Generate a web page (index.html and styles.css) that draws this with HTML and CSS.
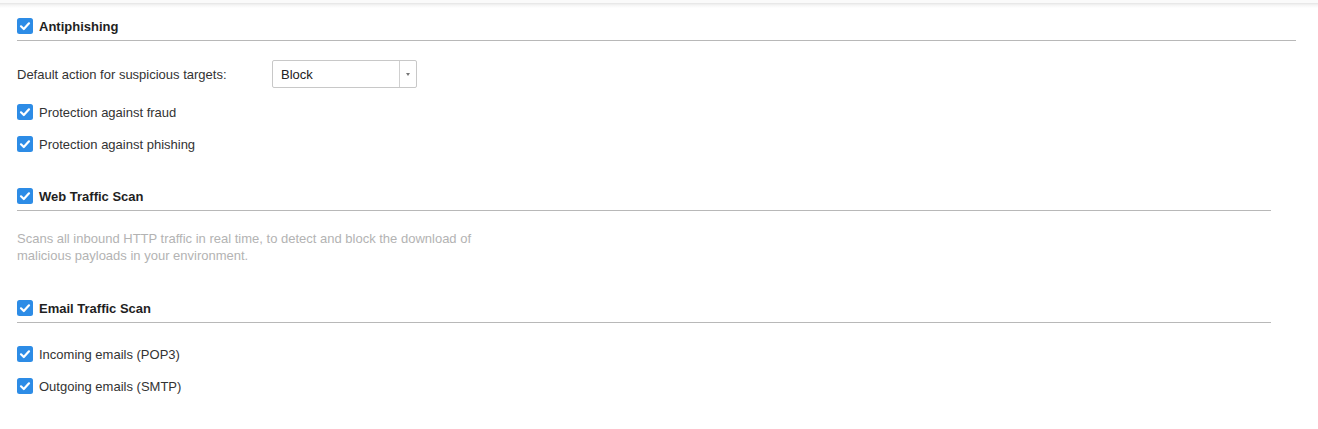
FILE: index.html
```html
<!DOCTYPE html>
<html>
<head>
<meta charset="utf-8">
<link rel="stylesheet" href="styles.css">
</head>
<body>
<div class="topshadow"></div>
<div class="page">
  <section class="section wide">
    <div class="heading">
      <svg class="cb" viewBox="0 0 16 16"><rect width="16" height="16" rx="2.5" fill="#2d8ce6"/><polyline points="4,8.3 6.8,11 12,5.3" fill="none" stroke="#fff" stroke-width="2.2" stroke-linecap="round" stroke-linejoin="round"/></svg>
      <span class="txt">Antiphishing</span>
    </div>
    <div class="field">
      <label class="field-label">Default action for suspicious targets:</label>
      <div class="select">
        <span class="select-value">Block</span>
        <span class="select-arrow"><i></i></span>
      </div>
    </div>
    <div class="row">
      <svg class="cb" viewBox="0 0 16 16"><rect width="16" height="16" rx="2.5" fill="#2d8ce6"/><polyline points="4,8.3 6.8,11 12,5.3" fill="none" stroke="#fff" stroke-width="2.2" stroke-linecap="round" stroke-linejoin="round"/></svg>
      <span class="txt">Protection against fraud</span>
    </div>
    <div class="row">
      <svg class="cb" viewBox="0 0 16 16"><rect width="16" height="16" rx="2.5" fill="#2d8ce6"/><polyline points="4,8.3 6.8,11 12,5.3" fill="none" stroke="#fff" stroke-width="2.2" stroke-linecap="round" stroke-linejoin="round"/></svg>
      <span class="txt">Protection against phishing</span>
    </div>
  </section>

  <section class="section narrow web">
    <div class="heading">
      <svg class="cb" viewBox="0 0 16 16"><rect width="16" height="16" rx="2.5" fill="#2d8ce6"/><polyline points="4,8.3 6.8,11 12,5.3" fill="none" stroke="#fff" stroke-width="2.2" stroke-linecap="round" stroke-linejoin="round"/></svg>
      <span class="txt">Web Traffic Scan</span>
    </div>
    <p class="desc">Scans all inbound HTTP traffic in real time, to detect and block the download of malicious payloads in your environment.</p>
  </section>

  <section class="section narrow email">
    <div class="heading">
      <svg class="cb" viewBox="0 0 16 16"><rect width="16" height="16" rx="2.5" fill="#2d8ce6"/><polyline points="4,8.3 6.8,11 12,5.3" fill="none" stroke="#fff" stroke-width="2.2" stroke-linecap="round" stroke-linejoin="round"/></svg>
      <span class="txt">Email Traffic Scan</span>
    </div>
    <div class="rows-email">
      <div class="row">
        <svg class="cb" viewBox="0 0 16 16"><rect width="16" height="16" rx="2.5" fill="#2d8ce6"/><polyline points="4,8.3 6.8,11 12,5.3" fill="none" stroke="#fff" stroke-width="2.2" stroke-linecap="round" stroke-linejoin="round"/></svg>
        <span class="txt">Incoming emails (POP3)</span>
      </div>
      <div class="row">
        <svg class="cb" viewBox="0 0 16 16"><rect width="16" height="16" rx="2.5" fill="#2d8ce6"/><polyline points="4,8.3 6.8,11 12,5.3" fill="none" stroke="#fff" stroke-width="2.2" stroke-linecap="round" stroke-linejoin="round"/></svg>
        <span class="txt">Outgoing emails (SMTP)</span>
      </div>
    </div>
  </section>
</div>
</body>
</html>
```

FILE: styles.css
```css
html, body {
  margin: 0;
  padding: 0;
  background: #fff;
}
body {
  font-family: "Liberation Sans", Arial, sans-serif;
  font-size: 13px;
  color: #333;
}
.topshadow {
  height: 8px;
  background: linear-gradient(#fafafa 0, #fafafa 3px, #e4e4e4 3px, #f4f4f4 5px, #fff 8px);
}
.page {
  padding-left: 17px;
  padding-top: 10px;
}
.section.wide { margin-right: 22px; }
.section.narrow { margin-right: 47px; }
.heading {
  display: flex;
  align-items: center;
  gap: 6px;
  height: 16px;
  padding-bottom: 6px;
  border-bottom: 1px solid #b8b8b8;
  font-weight: bold;
  color: #1f1f1f;
  line-height: 16px;
}
.txt {
  padding-top: 2px;
}
.cb {
  width: 16px;
  height: 16px;
  flex: none;
  display: block;
}
.field {
  display: flex;
  align-items: center;
  margin-top: 19px;
  height: 28px;
}
.field-label {
  width: 255px;
  flex: none;
  line-height: 16px;
  padding-top: 1px;
}
.select {
  display: flex;
  width: 145px;
  height: 28px;
  box-sizing: border-box;
  border: 1px solid #c8c8c8;
  border-radius: 2px;
  color: #222;
}
.select-value {
  flex: 1;
  padding-left: 8px;
  padding-top: 1px;
  line-height: 26px;
}
.select-arrow {
  width: 16px;
  border-left: 1px solid #d0d0d0;
  display: flex;
  align-items: center;
  justify-content: center;
}
.select-arrow i {
  width: 0;
  height: 0;
  border-left: 2.5px solid transparent;
  border-right: 2.5px solid transparent;
  border-top: 3px solid #777;
}
.row {
  display: flex;
  align-items: center;
  gap: 6px;
  height: 32px;
  line-height: 16px;
}
.field + .row { margin-top: 8px; }
.section.web { margin-top: 28px; }
.desc {
  margin: 19px 0 0;
  width: 470px;
  line-height: 17px;
  color: #b3b3b3;
}
.section.email { margin-top: 36px; }
.rows-email { margin-top: 15px; }
```
